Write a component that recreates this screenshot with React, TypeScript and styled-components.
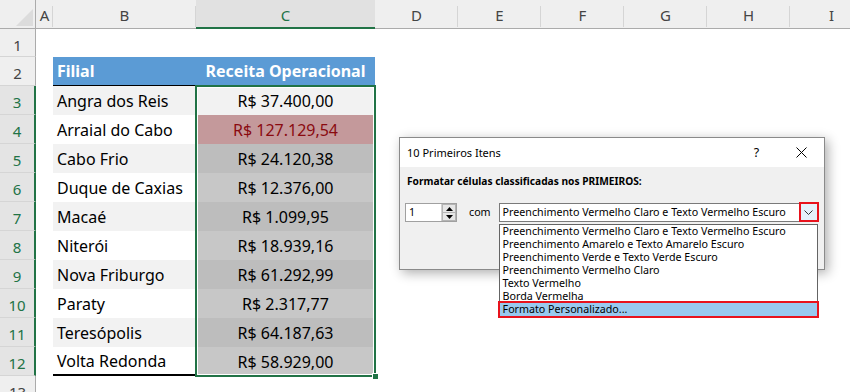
import React from 'react';
import styled, { createGlobalStyle } from 'styled-components';

const GREEN = '#217346';
const RED = '#e8121c';

const GlobalStyle = createGlobalStyle`
  *, *::before, *::after { box-sizing: border-box; }
  html, body { margin: 0; padding: 0; background: #ffffff; }
  body { font-family: "Noto Sans", "DejaVu Sans", sans-serif; }
`;

const Screen = styled.div`
  position: relative;
  width: 850px;
  height: 392px;
  overflow: hidden;
  background: #ffffff;
`;

const Sheet = styled.div`
  display: grid;
  grid-template-columns: 36px 17px 143px 179px repeat(6, 83px);
  grid-template-rows: 29px 28px repeat(13, 29px);
  font-family: "Noto Sans", sans-serif;
  color: #000;
`;

const Corner = styled.div`
  display: flex;
  align-items: flex-end;
  justify-content: flex-end;
  padding: 0 1px 1px 0;
  background: #efefef;
  border-right: 1px solid #ababab;
  border-bottom: 1px solid #ababab;
`;

const ColHeader = styled.div<{ $selected?: boolean }>`
  position: relative;
  display: flex;
  align-items: center;
  justify-content: center;
  padding-top: 2px;
  font-size: 15px;
  color: ${p => (p.$selected ? GREEN : '#444444')};
  background: ${p => (p.$selected ? '#e1e1e1' : '#efefef')};
  border-bottom: ${p => (p.$selected ? `2px solid ${GREEN}` : '1px solid #ababab')};
  &::after {
    content: '';
    position: absolute;
    right: 0;
    top: 6px;
    bottom: 1px;
    width: 1px;
    background: ${p => (p.$selected ? 'transparent' : '#d5d5d5')};
  }
`;

const RowHeader = styled.div<{ $selected?: boolean }>`
  display: flex;
  align-items: center;
  justify-content: center;
  padding-top: 4px;
  font-size: 15px;
  color: ${p => (p.$selected ? GREEN : '#444444')};
  background: ${p => (p.$selected ? '#e4e4e4' : '#efefef')};
  border-bottom: 1px solid #d5d5d5;
  border-right: ${p => (p.$selected ? `2px solid ${GREEN}` : '1px solid #ababab')};
`;

const Cell = styled.div<{
  $bg?: string;
  $center?: boolean;
  $color?: string;
  $bold?: boolean;
  $rule?: string;
}>`
  display: flex;
  align-items: center;
  justify-content: ${p => (p.$center ? 'center' : 'flex-start')};
  padding: 0 4px;
  font-size: 16px;
  white-space: nowrap;
  font-weight: ${p => (p.$bold ? 700 : 400)};
  color: ${p => p.$color || '#000000'};
  background: ${p => p.$bg || 'transparent'};
  border-bottom: ${p => p.$rule || 'none'};
`;

const Spacer = styled.div`
  grid-column: span 6;
`;

const Range = styled.div`
  grid-column: 4;
  grid-row: 4 / 14;
  position: relative;
  display: grid;
  grid-template-rows: repeat(10, 29px);
  &::after {
    content: '';
    position: absolute;
    inset: -1px;
    border: 2px solid ${GREEN};
    box-shadow: inset 0 0 0 1px #ffffff;
    pointer-events: none;
  }
`;

const FillHandle = styled.span`
  position: absolute;
  right: -4px;
  bottom: -4px;
  width: 7px;
  height: 7px;
  background: ${GREEN};
  border: 1px solid #ffffff;
  z-index: 1;
`;

/* ---------- Dialog ---------- */

const Dialog = styled.div`
  position: absolute;
  left: 399px;
  top: 137px;
  width: 426px;
  height: 133px;
  display: flex;
  flex-direction: column;
  border: 1px solid #8a8a8a;
  background: #f0f0f0;
  box-shadow: 3px 3px 11px rgba(0, 0, 0, 0.32);
  font-family: "Noto Sans", sans-serif;
  font-size: 10.7px;
  color: #000;
`;

const TitleBar = styled.div`
  display: flex;
  align-items: center;
  height: 29px;
  padding-left: 7px;
  background: #ffffff;
`;

const Title = styled.span`
  flex: 1;
  font-size: 11px;
`;

const TitleButton = styled.div`
  width: 45px;
  height: 29px;
  display: flex;
  align-items: center;
  justify-content: center;
  font-size: 12.5px;
`;

const Body = styled.div`
  flex: 1;
  display: flex;
  flex-direction: column;
  gap: 15px;
  padding: 7px 5px 0;
`;

const Label = styled.div`
  padding-left: 2px;
  font-size: 10.2px;
  font-weight: 700;
  line-height: 14px;
  white-space: nowrap;
`;

const Controls = styled.div`
  display: flex;
  align-items: center;
  height: 19px;
`;

const Spin = styled.div`
  display: flex;
  width: 52px;
  height: 19px;
  border: 1px solid #a0a0a0;
  background: #ffffff;
`;

const SpinValue = styled.span`
  flex: 1;
  padding-left: 3px;
  line-height: 17px;
`;

const SpinButtons = styled.div`
  width: 15px;
  display: flex;
  flex-direction: column;
  border-left: 1px solid #d0d0d0;
`;

const SpinButton = styled.div`
  flex: 1;
  display: flex;
  align-items: center;
  justify-content: center;
  background: #e6e6e6;
  border: 1px solid #b4b4b4;
  & + & {
    border-top: none;
  }
`;

const With = styled.span`
  margin-left: 12px;
  line-height: 19px;
`;

const Combo = styled.div`
  position: relative;
  display: flex;
  width: 320px;
  height: 19px;
  margin-left: 8px;
  border: 1px solid #7a7a7a;
  background: #ffffff;
`;

const ComboText = styled.span`
  flex: 1;
  padding-left: 3px;
  line-height: 17px;
  white-space: nowrap;
`;

const DropButton = styled.div`
  width: 20px;
  height: 20px;
  margin: -2px -1px -1px 0;
  display: flex;
  align-items: center;
  justify-content: center;
  border: 2px solid ${RED};
  background: #e5f1fb;
`;

const List = styled.ul`
  position: absolute;
  left: -1px;
  top: calc(100% + 3px);
  width: 319px;
  margin: 0;
  padding: 0;
  list-style: none;
  border: 1px solid #646464;
  background: #ffffff;
  z-index: 2;
`;

const Option = styled.li<{ $active?: boolean }>`
  height: 13px;
  line-height: 13px;
  padding-left: 3px;
  overflow: hidden;
  white-space: nowrap;
  background: ${p => (p.$active ? '#99c9ef' : 'transparent')};
  outline: ${p => (p.$active ? `2px solid ${RED}` : 'none')};
`;

const rows: [string, string][] = [
  ['Angra dos Reis', 'R$ 37.400,00'],
  ['Arraial do Cabo', 'R$ 127.129,54'],
  ['Cabo Frio', 'R$ 24.120,38'],
  ['Duque de Caxias', 'R$ 12.376,00'],
  ['Macaé', 'R$ 1.099,95'],
  ['Niterói', 'R$ 18.939,16'],
  ['Nova Friburgo', 'R$ 61.292,99'],
  ['Paraty', 'R$ 2.317,77'],
  ['Teresópolis', 'R$ 64.187,63'],
  ['Volta Redonda', 'R$ 58.929,00'],
];

const columns = ['A', 'B', 'C', 'D', 'E', 'F', 'G', 'H', 'I'];

const options = [
  'Preenchimento Vermelho Claro e Texto Vermelho Escuro',
  'Preenchimento Amarelo e Texto Amarelo Escuro',
  'Preenchimento Verde e Texto Verde Escuro',
  'Preenchimento Vermelho Claro',
  'Texto Vermelho',
  'Borda Vermelha',
  'Formato Personalizado...',
];

const BLUE = '#5b9bd5';
const BAND = '#f2f2f2';

function rangeBg(i: number): string {
  if (i === 0) return BAND;
  if (i === 1) return '#c4999b';
  return i % 2 === 0 ? '#bdbdbd' : '#c7c7c7';
}

export default function App() {
  return (
    <Screen>
      <GlobalStyle />
      <Sheet>
        <Corner>
          <svg width="18" height="18" viewBox="0 0 18 18">
            <polygon points="17,0 17,17 0,17" fill="#dcdcdc" />
          </svg>
        </Corner>
        {columns.map(c => (
          <ColHeader key={c} $selected={c === 'C'}>
            {c}
          </ColHeader>
        ))}

        <RowHeader>1</RowHeader>
        <Cell />
        <Cell />
        <Cell />
        <Spacer />

        <RowHeader>2</RowHeader>
        <Cell />
        <Cell $bg={BLUE} $bold $color="#ffffff" $rule="1px solid #000">
          Filial
        </Cell>
        <Cell $bg={BLUE} $bold $color="#ffffff" $center $rule="1px solid #000">
          Receita Operacional
        </Cell>
        <Spacer />

        <Range>
          {rows.map(([, value], i) => (
            <Cell key={value} $center $bg={rangeBg(i)} $color={i === 1 ? '#8a0a10' : '#000000'}>
              {value}
            </Cell>
          ))}
          <FillHandle />
        </Range>

        {rows.map(([name], i) => (
          <React.Fragment key={name}>
            <RowHeader $selected>{i + 3}</RowHeader>
            <Cell />
            <Cell
              $bg={i % 2 === 0 ? BAND : '#ffffff'}
              $rule={i === rows.length - 1 ? '2px solid #000' : undefined}
            >
              {name}
            </Cell>
            <Spacer />
          </React.Fragment>
        ))}

        <RowHeader>13</RowHeader>
        <Cell />
        <Cell />
        <Cell />
        <Spacer />
      </Sheet>

      <Dialog>
        <TitleBar>
          <Title>10 Primeiros Itens</Title>
          <TitleButton>?</TitleButton>
          <TitleButton>
            <svg width="11" height="11" viewBox="0 0 11 11">
              <path d="M0.5 0.5 L10.5 10.5 M10.5 0.5 L0.5 10.5" stroke="#000" strokeWidth="1" fill="none" />
            </svg>
          </TitleButton>
        </TitleBar>
        <Body>
          <Label>Formatar células classificadas nos PRIMEIROS:</Label>
          <Controls>
            <Spin>
              <SpinValue>1</SpinValue>
              <SpinButtons>
                <SpinButton>
                  <svg width="7" height="4" viewBox="0 0 7 4">
                    <polygon points="3.5,0 7,4 0,4" fill="#000" />
                  </svg>
                </SpinButton>
                <SpinButton>
                  <svg width="7" height="4" viewBox="0 0 7 4">
                    <polygon points="0,0 7,0 3.5,4" fill="#000" />
                  </svg>
                </SpinButton>
              </SpinButtons>
            </Spin>
            <With>com</With>
            <Combo>
              <ComboText>{options[0]}</ComboText>
              <DropButton>
                <svg width="9" height="5" viewBox="0 0 9 5">
                  <polyline points="0.5,0.5 4.5,4.5 8.5,0.5" stroke="#333" strokeWidth="1" fill="none" />
                </svg>
              </DropButton>
              <List>
                {options.map((o, i) => (
                  <Option key={o} $active={i === options.length - 1}>
                    {o}
                  </Option>
                ))}
              </List>
            </Combo>
          </Controls>
        </Body>
      </Dialog>
    </Screen>
  );
}
